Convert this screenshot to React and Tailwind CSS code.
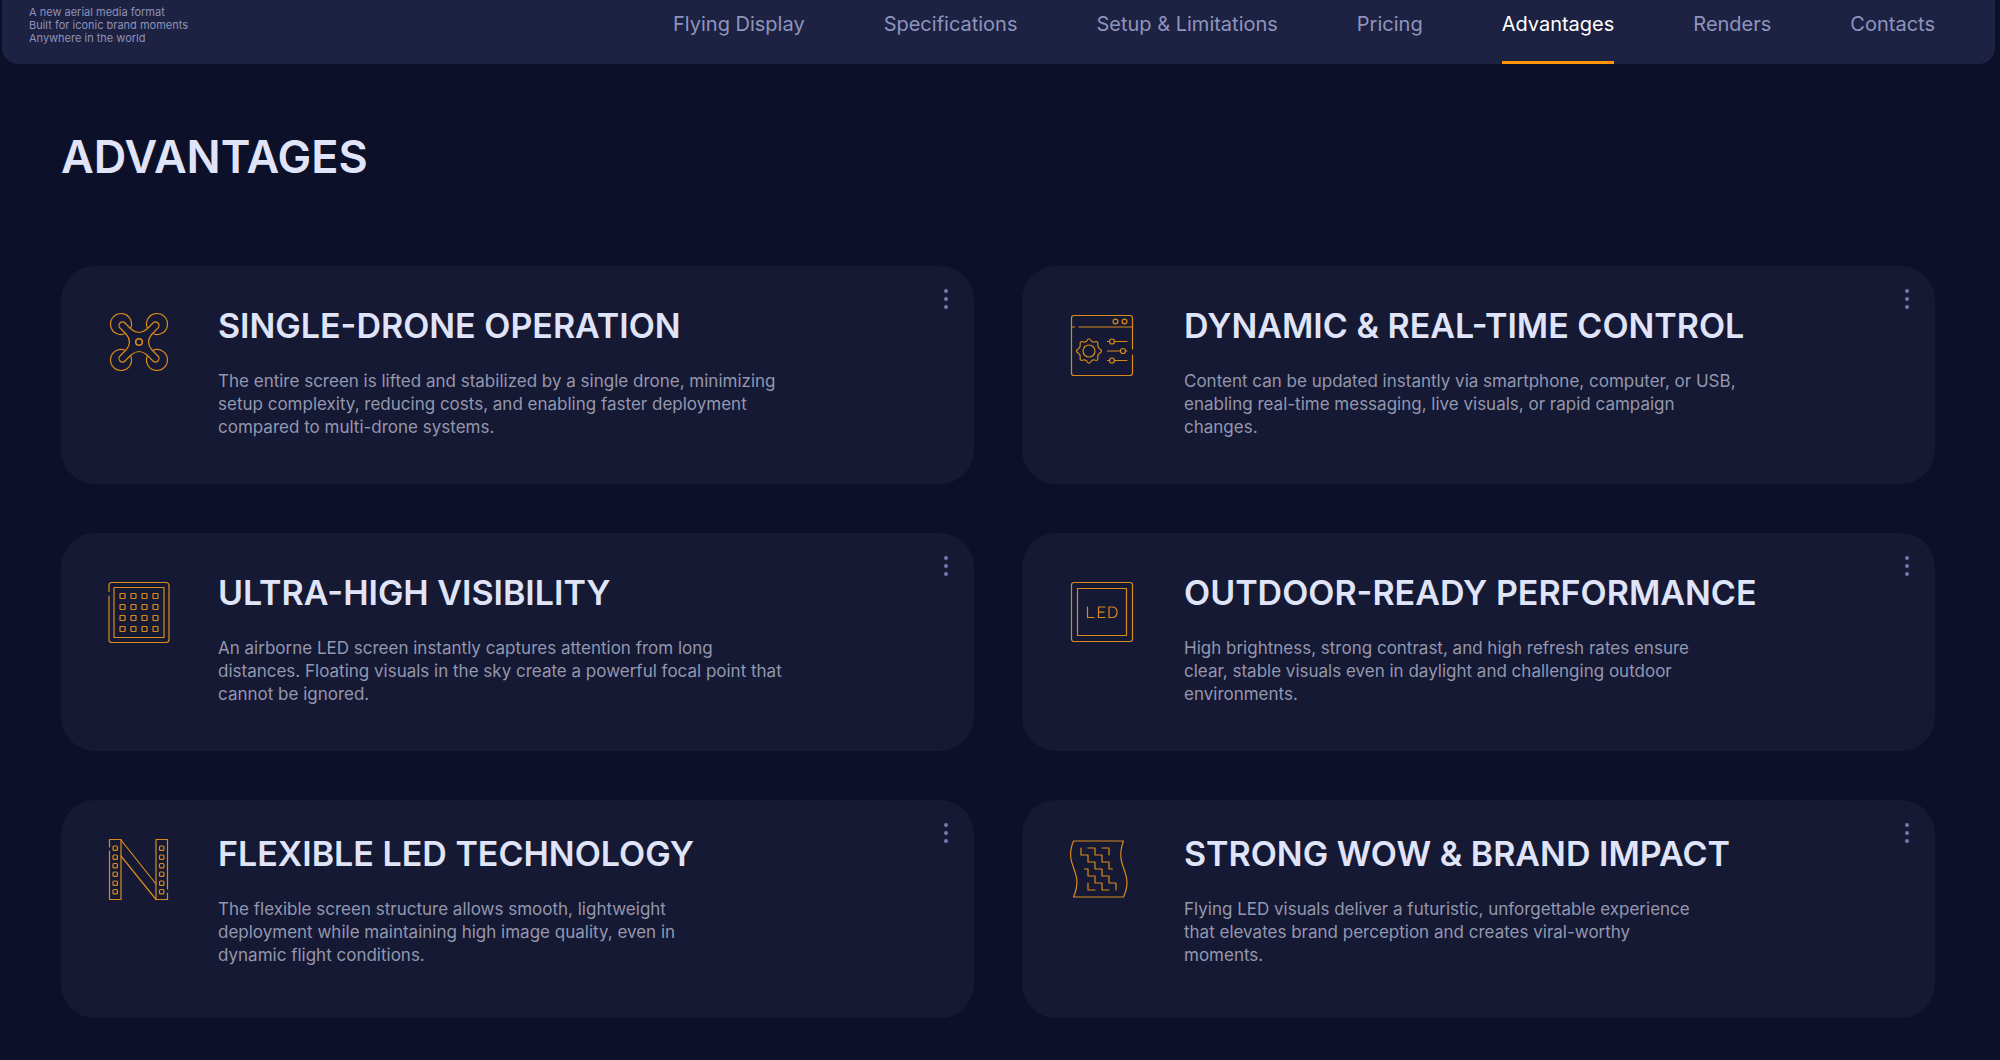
import React from "react";
import clsx from "clsx";

const links = [
  "Flying Display",
  "Specifications",
  "Setup & Limitations",
  "Pricing",
  "Advantages",
  "Renders",
  "Contacts",
];

const Icon = ({ children }) => (
  <svg
    viewBox="0 0 64 64"
    className="w-16 h-16 overflow-visible"
    fill="none"
    stroke="#d98a1c"
    strokeWidth="1.2"
    strokeLinecap="round"
    strokeLinejoin="round"
    aria-hidden="true"
  >
    {children}
  </svg>
);

const DroneIcon = () => (
  <Icon>
    <path d="M22.5 14.5A10.5 10.5 0 1 0 17.5 19.5" />
    <path d="M39.5 14.5A10.5 10.5 0 1 1 44.5 19.5" />
    <path d="M22.5 41.5A10.5 10.5 0 1 1 17.5 36.5" />
    <path d="M39.5 41.5A10.5 10.5 0 1 0 44.5 36.5" />
    <path d="M17 9L23 15Q31 22 39 15L45 9A3.5 3.5 0 0 1 50 14L44 20Q37 28 44 36L50 42A3.5 3.5 0 0 1 45 47L39 41Q31 34 23 41L17 47A3.5 3.5 0 0 1 12 42L18 36Q25 28 18 20L12 14A3.5 3.5 0 0 1 17 9Z" />
    <circle cx="31" cy="28" r="3.3" strokeWidth="1.6" />
  </Icon>
);

const ControlIcon = () => (
  <Icon>
    <path d="M62.5 35V4Q62.5 1.5 60 1.5H4Q1.5 1.5 1.5 4V59Q1.5 61.5 4 61.5H60Q62.5 61.5 62.5 59V41" />
    <path d="M1.5 13H4.5M9 13H62.5" />
    <circle cx="45.5" cy="7.5" r="2.4" />
    <circle cx="54.5" cy="7.5" r="2.4" />
    <circle cx="19" cy="37" r="6" />
    <path d="M17 26.5Q19 23 21 26.5Q22 28.5 24.5 28Q28.5 26.5 27.8 30.5Q27.3 33 29.5 34.7Q33.5 37 29.5 39.3Q27.3 41 27.8 43.5Q28.5 47.5 24.5 46Q22 45.5 21 47.5Q19 51 17 47.5Q16 45.5 13.5 46Q9.5 47.5 10.2 43.5Q10.7 41 8.5 39.3Q4.5 37 8.5 34.7Q10.7 33 10.2 30.5Q9.5 26.5 13.5 28Q16 28.5 17 26.5Z" />
    <path d="M37.5 27.5H39.5M44.5 27.5H57M37.5 37H50.5M55.5 37H57M37.5 46.5H39.5M44.5 46.5H57" />
    <circle cx="42" cy="27.5" r="2.5" />
    <circle cx="53" cy="37" r="2.5" />
    <circle cx="42" cy="46.5" r="2.5" />
  </Icon>
);

const MatrixIcon = () => (
  <Icon>
    <path d="M1 10.5V4.5Q1 1.5 4 1.5H58Q61 1.5 61 4.5V58.5Q61 61.5 58 61.5H4Q1 61.5 1 58.5V15" />
    <rect x="6" y="6.5" width="50" height="50" />
    {[12.5, 23.5, 34.5, 45.5].map((y) =>
      [12, 23, 34, 45].map((x) => (
        <rect key={`${x}-${y}`} x={x} y={y} width="5" height="5" rx="0.5" />
      ))
    )}
  </Icon>
);

const LedIcon = () => (
  <Icon>
    <rect x="1.5" y="1.5" width="61" height="59" rx="2.5" />
    <rect x="7.5" y="7.5" width="49" height="47" />
    <path d="M17.5 26V36.5H24M35 26H28.5V36.5H35M28.5 31.2H34M39 26V36.5H42Q47 36.5 47 31.2Q47 26 42 26Z" />
  </Icon>
);

const FlexIcon = () => (
  <Icon>
    <path d="M1.5 9V1.5H13V61.5H1.5V13" />
    <path d="M59.5 51V1.5H48V61.5H59.5V55" />
    <path d="M13 2L48 46M13 18L48 61.5" />
    {[8, 17, 25.5, 34, 43, 51.5].map((y) => (
      <React.Fragment key={y}>
        <rect x="5" y={y} width="4.4" height="4.4" rx="1" />
        <rect x="51.5" y={y} width="4.4" height="4.4" rx="1" />
      </React.Fragment>
    ))}
  </Icon>
);

const WaveIcon = () => (
  <Icon>
    <path d="M3.5 3H53.5C43.5 29.5 65 33.5 53.5 59H3.5C15 32.5 -7 28.5 3.5 3Z" />
    <path d="M11 10V17H18V24H25V31H32V38H39V45H46V52M18 10H25V17H32V24H39V31H42.5M32 10H39V17M14.5 31H18V38H25V45H32V52H39M18 45V52H25" />
  </Icon>
);

const advantages = [
  {
    title: "SINGLE-DRONE OPERATION",
    icon: DroneIcon,
    lines: [
      "The entire screen is lifted and stabilized by a single drone, minimizing",
      "setup complexity, reducing costs, and enabling faster deployment",
      "compared to multi-drone systems.",
    ],
  },
  {
    title: "DYNAMIC & REAL-TIME CONTROL",
    icon: ControlIcon,
    lines: [
      "Content can be updated instantly via smartphone, computer, or USB,",
      "enabling real-time messaging, live visuals, or rapid campaign",
      "changes.",
    ],
  },
  {
    title: "ULTRA-HIGH VISIBILITY",
    icon: MatrixIcon,
    lines: [
      "An airborne LED screen instantly captures attention from long",
      "distances. Floating visuals in the sky create a powerful focal point that",
      "cannot be ignored.",
    ],
  },
  {
    title: "OUTDOOR-READY PERFORMANCE",
    icon: LedIcon,
    lines: [
      "High brightness, strong contrast, and high refresh rates ensure",
      "clear, stable visuals even in daylight and challenging outdoor",
      "environments.",
    ],
  },
  {
    title: "FLEXIBLE LED TECHNOLOGY",
    icon: FlexIcon,
    lines: [
      "The flexible screen structure allows smooth, lightweight",
      "deployment while maintaining high image quality, even in",
      "dynamic flight conditions.",
    ],
  },
  {
    title: "STRONG WOW & BRAND IMPACT",
    icon: WaveIcon,
    lines: [
      "Flying LED visuals deliver a futuristic, unforgettable experience",
      "that elevates brand perception and creates viral-worthy",
      "moments.",
    ],
  },
];

function Card({ item, right, last }) {
  const Glyph = item.icon;

  return (
    <article
      className={clsx(
        "relative flex items-start bg-[#151934] rounded-[34px]",
        right ? "pl-12 gap-[50px]" : "pl-[47px] gap-[46px]",
        last ? "pt-[38px] pb-[51px]" : "pt-12 pb-[45px]"
      )}
    >
      <div className="shrink-0">
        <Glyph />
      </div>
      <div className={last ? "pt-1" : ""}>
        <h2 className="text-[34px] leading-6 font-semibold text-[#e0e4f8] whitespace-nowrap">
          {item.title}
        </h2>
        <p className="mt-8 text-[17px] leading-[23px] text-[#9497ae]">
          {item.lines.map((line) => (
            <span key={line} className="block">
              {line}
            </span>
          ))}
        </p>
      </div>
      <button
        aria-label={`More about ${item.title}`}
        className="absolute top-[23px] right-[26px] flex flex-col gap-1"
      >
        <span className="w-1 h-1 rounded-full bg-[#747aac]" />
        <span className="w-1 h-1 rounded-full bg-[#747aac]" />
        <span className="w-1 h-1 rounded-full bg-[#747aac]" />
      </button>
    </article>
  );
}

export default function App() {
  return (
    <div className="min-h-screen bg-[#0c1029] font-['Inter',sans-serif]">
      <header className="ml-0.5 mr-[5px] h-16 pl-[27px] pr-[60px] flex justify-between bg-[#1d2142] rounded-b-2xl">
        <p className="pt-1.5 text-[11px] leading-[13px] text-[#8d92b8]">
          A new aerial media format
          <br />
          Built for iconic brand moments
          <br />
          Anywhere in the world
        </p>
        <nav className="w-[1262px] flex justify-between text-xl text-[#8f94bd]">
          {links.map((link) => (
            <a
              key={link}
              href="#"
              className={clsx(
                "pt-2.5 leading-7 border-b-3",
                link === "Advantages"
                  ? "text-white border-[#ff9500]"
                  : "border-transparent"
              )}
            >
              {link}
            </a>
          ))}
        </nav>
      </header>

      <main className="pl-[61px] pr-[65px] pt-16 pb-10">
        <h1 className="text-[45px] leading-[58px] font-semibold text-[#e0e4f8]">
          ADVANTAGES
        </h1>
        <section className="mt-20 grid grid-cols-2 gap-x-12 gap-y-[49px]">
          {advantages.map((item, i) => (
            <Card
              key={item.title}
              item={item}
              right={i % 2 === 1}
              last={i > 3}
            />
          ))}
        </section>
      </main>
    </div>
  );
}
